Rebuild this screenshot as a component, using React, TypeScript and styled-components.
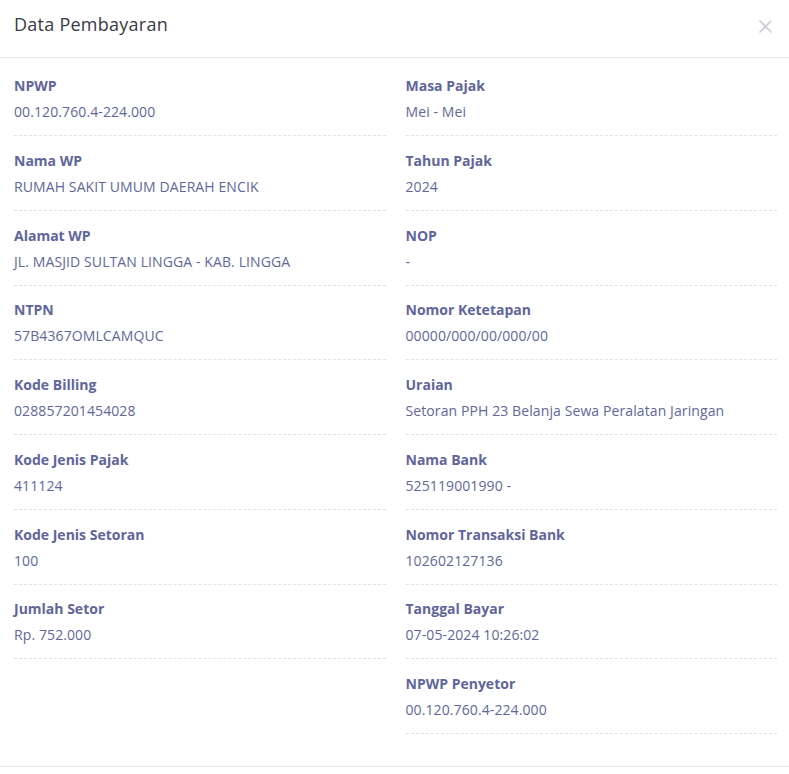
import React from "react";
import styled, { createGlobalStyle } from "styled-components";

const Global = createGlobalStyle`
  html, body { margin: 0; padding: 0; background: #fff; }
  body { font-family: "Open Sans", "Noto Sans", sans-serif; }
  * { box-sizing: border-box; }
`;

const Modal = styled.div`
  width: 789px;
  min-height: 774px;
  background: #fff;
  display: flex;
  flex-direction: column;
`;

const Header = styled.div`
  height: 58px;
  border-bottom: 1px solid #e9e9ef;
  display: flex;
  align-items: center;
  justify-content: space-between;
  padding: 0 17px 10px 14px;
`;

const Title = styled.h5`
  margin: 0;
  font-size: 18px;
  line-height: 24px;
  font-weight: 400;
  color: #3b3946;
  letter-spacing: 0.25px;
`;

const Close = styled.button`
  border: none;
  background: none;
  padding: 0;
  width: 14px;
  height: 14px;
  display: flex;
  align-items: center;
  justify-content: center;
  cursor: pointer;
  margin-top: 5px;
`;

const Body = styled.div`
  display: grid;
  grid-template-columns: 1fr 1fr;
  column-gap: 20px;
  padding: 18px 12px 32px 14px;
  border-bottom: 1px solid #e9e9ef;
`;

const Column = styled.div`
  display: flex;
  flex-direction: column;
`;

const Item = styled.div`
  padding-bottom: 13px;
  margin-bottom: 14.75px;
  border-bottom: 1px dashed #e2e2e8;
  &:last-child { margin-bottom: 0; }
`;

const Label = styled.div`
  font-size: 14px;
  line-height: 20px;
  font-weight: 700;
  color: #60659a;
  margin-bottom: 6px;
`;

const Value = styled.div`
  font-size: 14px;
  line-height: 20px;
  font-weight: 400;
  color: #62679a;
  letter-spacing: 0.1px;
`;

const left: [string, string][] = [
  ["NPWP", "00.120.760.4-224.000"],
  ["Nama WP", "RUMAH SAKIT UMUM DAERAH ENCIK"],
  ["Alamat WP", "JL. MASJID SULTAN LINGGA - KAB. LINGGA"],
  ["NTPN", "57B4367OMLCAMQUC"],
  ["Kode Billing", "028857201454028"],
  ["Kode Jenis Pajak", "411124"],
  ["Kode Jenis Setoran", "100"],
  ["Jumlah Setor", "Rp. 752.000"],
];

const right: [string, string][] = [
  ["Masa Pajak", "Mei - Mei"],
  ["Tahun Pajak", "2024"],
  ["NOP", "-"],
  ["Nomor Ketetapan", "00000/000/00/000/00"],
  ["Uraian", "Setoran PPH 23 Belanja Sewa Peralatan Jaringan"],
  ["Nama Bank", "525119001990 -"],
  ["Nomor Transaksi Bank", "102602127136"],
  ["Tanggal Bayar", "07-05-2024 10:26:02"],
  ["NPWP Penyetor", "00.120.760.4-224.000"],
];

const Col = ({ items }: { items: [string, string][] }) => (
  <Column>
    {items.map(([l, v]) => (
      <Item key={l}>
        <Label>{l}</Label>
        <Value>{v}</Value>
      </Item>
    ))}
  </Column>
);

export default function App() {
  return (
    <>
      <Global />
      <Modal>
        <Header>
          <Title>Data Pembayaran</Title>
          <Close aria-label="close">
            <svg width="13" height="13" viewBox="0 0 13 13">
              <path d="M1 1L12 12M12 1L1 12" stroke="#c9c9d9" strokeWidth="1.6" strokeLinecap="round" />
            </svg>
          </Close>
        </Header>
        <Body>
          <Col items={left} />
          <Col items={right} />
        </Body>
      </Modal>
    </>
  );
}
